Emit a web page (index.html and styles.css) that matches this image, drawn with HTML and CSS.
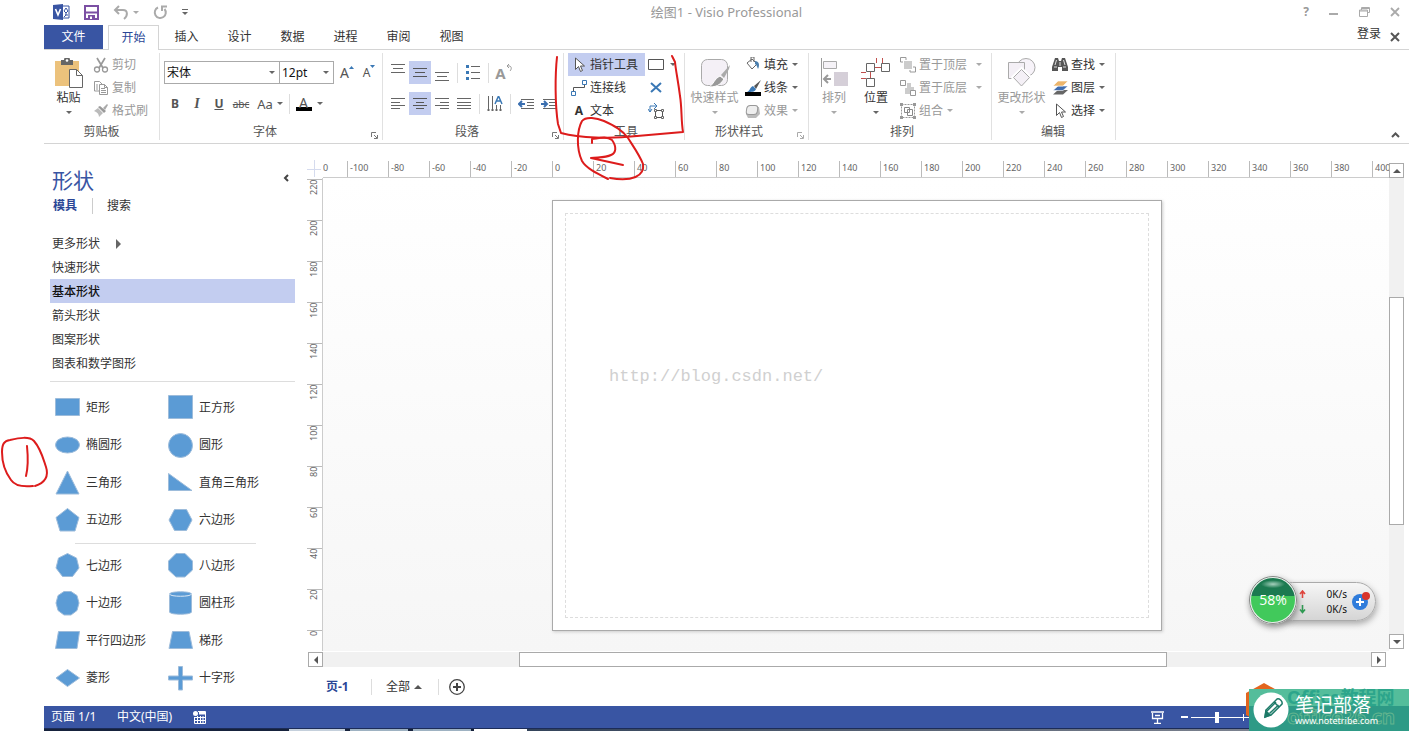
FILE: index.html
```html
<!DOCTYPE html>
<html lang="zh-CN">
<head>
<meta charset="utf-8">
<title>绘图1 - Visio Professional</title>
<link rel="stylesheet" href="styles.css">
</head>
<body>
<div class="app">
  <header class="titlebar">
    <div class="quick">
      <svg width="17" height="16" viewBox="0 0 17 16"><path d="M9 2h7v12H9z" fill="#fff" stroke="#3955a3"/><path d="M0 1l10-1v16L0 15z" fill="#3955a3"/><path d="M2.500 5l2.500 6 2.500-6" fill="none" stroke="#fff" stroke-width="1.600"/><path d="M11 7l2-3 2 3-2 2zM13 9v2l-2 2M12 11h3" fill="none" stroke="#3955a3"/></svg>
      <button class="bare" aria-label="保存"><svg width="15" height="15" viewBox="0 0 15 15"><path d="M1 1h13v13H1z" fill="#fff" stroke="#7b4fa3" stroke-width="2"/><path d="M2 7.500h11" stroke="#7b4fa3" stroke-width="2"/><path d="M4 10h7v4H4z" fill="#7b4fa3"/><path d="M6 11.500h2V14H6z" fill="#fff"/></svg></button>
      <button class="bare undo" aria-label="撤消"><svg width="16" height="15" viewBox="0 0 16 15"><path d="M6 1L2 5l4 4M2 5h8c5 0 5 6 1 9" fill="none" stroke="#aaa" stroke-width="2"/></svg><i class="caret dim"></i></button>
      <button class="bare" aria-label="重复"><svg width="15" height="15" viewBox="0 0 15 15"><path d="M5 2.500A5.500 5.500 0 1 0 11.500 4M9 6V1.500h5" fill="none" stroke="#aaa" stroke-width="2"/></svg></button>
      <button class="bare custom" aria-label="自定义"><i class="bar"></i><i class="caret"></i></button>
    </div>
    <h1 class="doc-title">绘图1 - Visio Professional</h1>
    <div class="window-buttons">
      <button class="bare" aria-label="帮助"><b>?</b></button>
      <button class="bare" aria-label="最小化"><svg width="10" height="12" viewBox="0 0 10 12"><path d="M0 8h9" stroke="#aaa" stroke-width="2"/></svg></button>
      <button class="bare" aria-label="还原"><svg width="11" height="10" viewBox="0 0 11 10"><path d="M2.500 3V.500h8v5H8M.500 3h8v6.500h-8zM.500 4h8M2.500 1.500h8" fill="none" stroke="#aaa"/></svg></button>
      <button class="bare" aria-label="关闭"><svg width="10" height="10" viewBox="0 0 10 10"><path d="M1 1l8 8M9 1L1 9" stroke="#aaa" stroke-width="1.800"/></svg></button>
    </div>
  </header>

  <nav class="tabs">
    <button class="tab file">文件</button>
    <button class="tab active">开始</button>
    <button class="tab">插入</button>
    <button class="tab">设计</button>
    <button class="tab">数据</button>
    <button class="tab">进程</button>
    <button class="tab">审阅</button>
    <button class="tab">视图</button>
    <div class="account"><a href="#">登录</a><button class="bare" aria-label="关闭文档"><svg width="10" height="10" viewBox="0 0 10 10"><path d="M1 1l8 8M9 1L1 9" stroke="#555" stroke-width="2"/></svg></button></div>
  </nav>

  <div class="ribbon">
    <section class="group g-clip">
      <div class="body">
        <button class="big"><svg width="30" height="30" viewBox="0 0 30 30"><path d="M1 3h24v25H1z" fill="#ecc27c"/><path d="M7 2h3a3 3 0 0 1 6 0h3v5H7z" fill="#666"/><circle cx="13" cy="2.500" r="1.300" fill="#fff"/><path d="M15.500 11.500h7l6 6v12h-13z" fill="#fff" stroke="#666"/><path d="M22.500 11.500v6h6" fill="none" stroke="#666"/></svg>粘贴<i class="caret"></i></button>
        <div class="stack">
          <button class="cmd off"><svg width="16" height="16" viewBox="0 0 16 16"><path d="M4 1l6 10M12 1L6 11" stroke="#999" stroke-width="1.700"/><circle cx="4" cy="12.500" r="2.500" fill="none" stroke="#999" stroke-width="1.300"/><circle cx="12" cy="12.500" r="2.500" fill="none" stroke="#999" stroke-width="1.300"/></svg>剪切</button>
          <button class="cmd off"><svg width="16" height="16" viewBox="0 0 16 16"><path d="M6 11H1.500V1.500h5L9 4M6.500 4.500h5l3 3v7h-8z" fill="none" stroke="#999"/><path d="M3 5h2M3 7h2M3 9h2M8 8.500h4M8 10.500h5M8 12.500h5M11.500 4.500v3h3" fill="none" stroke="#999"/></svg>复制</button>
          <button class="cmd off"><svg width="16" height="16" viewBox="0 0 16 16"><path d="M1 8l4-3 5 5-4 4c0-3-2-5-5-6z" fill="#bbb"/><path d="M5 4l2-1 6 5-2 2z" fill="#999"/><path d="M10 5l4-4 1 1-3 5z" fill="#aaa"/></svg>格式刷</button>
        </div>
      </div>
      <h2>剪贴板</h2>
    </section>

    <section class="group g-font">
      <div class="body rows">
        <div class="line">
          <label class="combo wide"><select aria-label="字体"><option>宋体</option></select><i class="caret"></i></label>
          <label class="combo"><select aria-label="字号"><option>12pt</option></select><i class="caret"></i></label>
          <button class="ic grow" aria-label="增大字号">A<svg width="5" height="4" viewBox="0 0 5 4"><path d="M0 4l2.500-3L5 4z" fill="#3a78b5"/></svg></button>
          <button class="ic grow small" aria-label="减小字号">A<svg width="5" height="4" viewBox="0 0 5 4"><path d="M0 0h5L2.500 3z" fill="#3a78b5"/></svg></button>
        </div>
        <div class="line">
          <button class="ic"><b>B</b></button>
          <button class="ic"><b class="it">I</b></button>
          <button class="ic"><b class="ul">U</b></button>
          <button class="ic"><s>abc</s></button>
          <button class="ic case">Aa<i class="caret"></i></button>
          <i class="vsep"></i>
          <button class="ic color"><span>A</span><i class="caret"></i></button>
        </div>
      </div>
      <h2>字体</h2><button class="launch" aria-label="字体设置"><svg width="7" height="7" viewBox="0 0 7 7"><path d="M.500 5V.500H5M3 3l3 3M6.500 3v3.500H3" fill="none" stroke="#777"/></svg></button>
    </section>

    <section class="group g-para">
      <div class="body rows">
        <div class="line">
          <button class="ic top" aria-label="顶端对齐"><svg width="16" height="16" viewBox="0 0 16 16"><path d="M1 .500h14M3 4.500h10M1 8.500h14" stroke="#666"/></svg></button>
          <button class="ic on" aria-label="中部对齐"><svg width="16" height="16" viewBox="0 0 16 16"><path d="M1 3.500h14M3 7.500h10M1 11.500h14" stroke="#555"/></svg></button>
          <button class="ic" aria-label="底端对齐"><svg width="16" height="16" viewBox="0 0 16 16"><path d="M1 7.500h14M3 11.500h10M1 15.500h14" stroke="#666"/></svg></button>
          <i class="vsep wide"></i>
          <button class="ic" aria-label="项目符号"><svg width="16" height="16" viewBox="0 0 16 16"><path d="M1 0h3v3H1zM1 6h3v3H1zM1 12h3v3H1z" fill="#3a78b5"/><path d="M6 1.500h9M6 7.500h9M6 13.500h9" stroke="#666"/></svg></button>
          <i class="vsep wide"></i>
          <button class="ic rotate" aria-label="旋转文字"><b>A</b><svg width="7" height="8" viewBox="0 0 7 8"><path d="M3 0L1 2l2 2M1 2c5-1 5 3 3 5" fill="none" stroke="#999"/></svg></button>
        </div>
        <div class="line">
          <button class="ic" aria-label="左对齐"><svg width="16" height="16" viewBox="0 0 16 16"><path d="M1 2.500h14M1 6.500h9M1 9.500h14M1 12.500h9" stroke="#666"/></svg></button>
          <button class="ic on" aria-label="居中"><svg width="16" height="16" viewBox="0 0 16 16"><path d="M1 2.500h14M4 6.500h8M1 9.500h14M4 12.500h8" stroke="#555"/></svg></button>
          <button class="ic" aria-label="右对齐"><svg width="16" height="16" viewBox="0 0 16 16"><path d="M1 2.500h14M6 6.500h9M1 9.500h14M6 12.500h9" stroke="#666"/></svg></button>
          <button class="ic" aria-label="两端对齐"><svg width="16" height="16" viewBox="0 0 16 16"><path d="M1 2.500h14M1 6.500h14M1 9.500h14M1 12.500h14" stroke="#666"/></svg></button>
          <i class="vsep wide"></i>
          <button class="ic" aria-label="文字方向"><svg width="16" height="16" viewBox="0 0 16 16"><path d="M1.500 0v15M5.500 0v15M9.500 9v6M13.500 9v6M4 14h3M8 14h3M12 14h3M0 14h3" stroke="#666"/><path d="M8 8l3.500-8L15 8M9.500 5h4" fill="none" stroke="#3a78b5" stroke-width="1.500"/></svg></button>
          <i class="vsep wide"></i>
          <button class="ic" aria-label="减少缩进"><svg width="16" height="16" viewBox="0 0 16 16"><path d="M3 3.500h13M9 6.500h7M9 9.500h7M3 12.500h13" stroke="#666"/><path d="M4 5L1 8l3 3M1 8h6" fill="none" stroke="#3a6fb0" stroke-width="2"/></svg></button>
          <button class="ic" aria-label="增加缩进"><svg width="16" height="16" viewBox="0 0 16 16"><path d="M3 3.500h13M9 6.500h7M9 9.500h7M3 12.500h13" stroke="#666"/><path d="M4 5l3 3-3 3M7 8H1" fill="none" stroke="#3a6fb0" stroke-width="2"/></svg></button>
        </div>
      </div>
      <h2>段落</h2><button class="launch" aria-label="段落设置"><svg width="7" height="7" viewBox="0 0 7 7"><path d="M.500 5V.500H5M3 3l3 3M6.500 3v3.500H3" fill="none" stroke="#777"/></svg></button>
    </section>

    <section class="group g-tool">
      <div class="body">
        <div class="stack">
          <button class="cmd on"><svg width="16" height="16" viewBox="0 0 16 16"><path d="M4.500 1v11.500l3-3 2 5 2-1-2-4.500h4z" fill="#fff" stroke="#555"/></svg>指针工具</button>
          <button class="cmd"><svg width="16" height="16" viewBox="0 0 16 16"><path d="M.500 11.500h4v4h-4zM11.500.500h4v4h-4z" fill="none" stroke="#3a78b5"/><path d="M2.500 11V7.500h11V5" fill="none" stroke="#555"/></svg>连接线</button>
          <button class="cmd"><b class="letter">A</b>文本</button>
        </div>
        <div class="stack extra">
          <button class="cmd" aria-label="矩形"><svg width="16" height="16" viewBox="0 0 16 16"><path d="M.500 2.500h15v10H.500z" fill="#fff" stroke="#555"/></svg><i class="caret"></i></button>
          <button class="cmd" aria-label="连接点"><svg width="16" height="16" viewBox="0 0 16 16"><path d="M3 3l10 9M13 3L3 12" stroke="#3a78b5" stroke-width="2"/></svg></button>
          <button class="cmd" aria-label="文本块"><svg width="16" height="16" viewBox="0 0 16 16"><path d="M7.500 7.500h7v7h-7z" fill="none" stroke="#555"/><path d="M6.500 6.500h2v2h-2zM13.500 6.500h2v2h-2zM6.500 13.500h2v2h-2zM13.500 13.500h2v2h-2z" fill="#fff" stroke="#666"/><path d="M2 9V3h6M0 6l2 3 2-3M6 0l3 3-3 3" fill="none" stroke="#3a78b5"/></svg></button>
        </div>
      </div>
      <h2>工具</h2>
    </section>

    <section class="group g-style">
      <div class="body">
        <button class="big off"><svg width="30" height="30" viewBox="0 0 30 30"><rect x="1.500" y="1.500" width="26" height="26" rx="6" fill="#f4f0f6" stroke="#aaa"/><path d="M30 7l-9 10 3 3 5-9z" fill="#aaa"/><path d="M20 18l4 3c-3 4-5 8-15 8 5-3 5-8 11-11z" fill="#999" stroke="#fff"/></svg>快速样式<i class="caret"></i></button>
        <div class="stack">
          <button class="cmd"><svg width="16" height="16" viewBox="0 0 16 16"><path d="M2 6l5-4 5 5-5 5z" fill="#fff" stroke="#666"/><path d="M6 5V0h3v5" fill="none" stroke="#666"/><path d="M10 4c4 0 5 4 3 8-1-2-1-4-3-5z" fill="#4b7fae"/></svg>填充<i class="caret"></i></button>
          <button class="cmd"><svg width="16" height="16" viewBox="0 0 16 16"><path d="M0 12h16v4H0z" fill="#000"/><path d="M16 0l-7 6 2 3z" fill="#555"/><path d="M8 6l3 3c-1 3-4 3-9 3 3-1 3-5 6-6z" fill="#3a78b5"/></svg>线条<i class="caret"></i></button>
          <button class="cmd off"><svg width="16" height="16" viewBox="0 0 16 16"><path d="M5 4h9l1 7-4 4H3l-2-4z" fill="#bbb"/><rect x="2.500" y="2.500" width="11" height="9" rx="3" fill="#eee" stroke="#999" transform="skewX(-8)"/></svg>效果<i class="caret"></i></button>
        </div>
      </div>
      <h2>形状样式</h2><button class="launch off" aria-label="形状样式设置"><svg width="7" height="7" viewBox="0 0 7 7"><path d="M.500 5V.500H5M3 3l3 3M6.500 3v3.500H3" fill="none" stroke="#aaa"/></svg></button>
    </section>

    <section class="group g-arrange">
      <div class="body">
        <button class="big off"><svg width="30" height="30" viewBox="0 0 30 30"><path d="M2.500 0v29" stroke="#999"/><path d="M4.500 3.500h13v7h-13z" fill="#f5f2f7" stroke="#aaa"/><path d="M15 14h14v14H15z" fill="#d5cfd8"/><path d="M9 17l-4 4 4 4M5 21h7" fill="none" stroke="#999" stroke-width="2"/></svg>排列<i class="caret"></i></button>
        <button class="big"><svg width="30" height="30" viewBox="0 0 30 30"><path d="M15.500 0v5M21.500 0v5M14 9.500h6M0 14.500h5M0 20.500h5M9.500 14v7" stroke="#c0504d"/><path d="M5.500 5.500h8v8h-8zM20.500 5.500h8v8h-8zM5.500 20.500h8v8h-8z" fill="#fff" stroke="#666"/></svg>位置<i class="caret"></i></button>
        <div class="stack">
          <button class="cmd off"><svg width="16" height="16" viewBox="0 0 16 16"><path d="M4 4h8v8H4z" fill="#ccc"/><path d="M3 5H.500V.500H6V3M13 10h2.500v5H10v-2" fill="none" stroke="#999"/></svg>置于顶层<i class="caret far"></i></button>
          <button class="cmd off"><svg width="16" height="16" viewBox="0 0 16 16"><path d="M7 3h4v4h3v4h-4v3H5V8h2z" fill="#ccc"/><path d="M.500.500h5v5h-5zM10.500 10.500h5v5h-5z" fill="#fff" stroke="#999"/></svg>置于底层<i class="caret far"></i></button>
          <button class="cmd off"><svg width="16" height="16" viewBox="0 0 16 16"><path d="M1.500 1.500h13v13h-13z" fill="none" stroke="#999" stroke-dasharray="2 1"/><path d="M4.500 4.500h5v5h-5zM7.500 6.500h5v6h-5z" fill="none" stroke="#888"/><path d="M0 0h3v3H0zM13 0h3v3h-3zM0 13h3v3H0zM13 13h3v3h-3z" fill="#999"/></svg>组合<i class="caret"></i></button>
        </div>
      </div>
      <h2>排列</h2>
    </section>

    <section class="group g-edit">
      <div class="body">
        <button class="big off"><svg width="30" height="30" viewBox="0 0 30 30"><circle cx="19" cy="9.500" r="9" fill="#f7f3f9" stroke="#aaa"/><path d="M1.500 4.500h16v16h-16z" fill="#f4f0f6" stroke="#aaa"/><path d="M14.500 10.500l9 9-9 9-9-9z" fill="#f4f0f6" stroke="#fff" stroke-width="3"/><path d="M14.500 11.500l8 8-8 8.500-8-8.500z" fill="#f4f0f6" stroke="#aaa"/></svg>更改形状<i class="caret"></i></button>
        <div class="stack">
          <button class="cmd"><svg width="16" height="16" viewBox="0 0 16 16"><path d="M3 1h3l1 3h2l1-3h3l3 9v4h-6v-4H6v4H0v-4z" fill="#555"/><path d="M2 10h3M11 10h3M4.500 3L3 8M11.500 3l1.500 5M8 5v4" stroke="#ddd"/></svg>查找<i class="caret"></i></button>
          <button class="cmd"><svg width="16" height="16" viewBox="0 0 16 16"><path d="M6 10h10l-5 4.500H1z" fill="#666"/><path d="M6 6h10l-5 4.500H1z" fill="#3f6db0" stroke="#fff" stroke-width=".6"/><path d="M6 1h10l-5 5H1z" fill="#ecb56c" stroke="#fff" stroke-width=".6"/></svg>图层<i class="caret"></i></button>
          <button class="cmd"><svg width="16" height="16" viewBox="0 0 16 16"><path d="M4.500 1v11.500l3-3 2 5 2-1-2-4.500h4z" fill="#fff" stroke="#555"/></svg>选择<i class="caret"></i></button>
        </div>
      </div>
      <h2>编辑</h2>
    </section>
    <button class="bare collapse" aria-label="折叠功能区"><svg width="9" height="6" viewBox="0 0 9 6"><path d="M1 5l3.500-3.500L8 5" fill="none" stroke="#555" stroke-width="2"/></svg></button>
  </div>

  <main class="work">
    <aside class="pane">
      <div class="pane-head"><h2>形状</h2><button class="bare" aria-label="折叠"><svg width="6" height="8" viewBox="0 0 6 8"><path d="M5 1L2 4l3 3" fill="none" stroke="#444" stroke-width="2"/></svg></button></div>
      <div class="pane-tabs"><button class="bare sel">模具</button><button class="bare">搜索</button></div>
      <ul class="stencils">
        <li><button class="bare">更多形状<i class="tri"></i></button></li>
        <li><button class="bare">快速形状</button></li>
        <li class="sel"><button class="bare">基本形状</button></li>
        <li><button class="bare">箭头形状</button></li>
        <li><button class="bare">图案形状</button></li>
        <li><button class="bare">图表和数学图形</button></li>
      </ul>
      <ul class="shapes">
        <li><svg width="25" height="25" viewBox="0 0 25 25"><path d="M.500 3.500h24v17H.500z"/></svg>矩形</li>
        <li><svg width="25" height="25" viewBox="0 0 25 25"><path d="M.500.500h24v23H.500z"/></svg>正方形</li>
        <li><svg width="25" height="25" viewBox="0 0 25 25"><ellipse cx="12.500" cy="12" rx="12" ry="8"/></svg>椭圆形</li>
        <li><svg width="25" height="25" viewBox="0 0 25 25"><circle cx="12.500" cy="12.500" r="12"/></svg>圆形</li>
        <li><svg width="25" height="25" viewBox="0 0 25 25"><path d="M12.500 1L24 24H1z"/></svg>三角形</li>
        <li><svg width="25" height="25" viewBox="0 0 25 25"><path d="M.500 3.500L24 20.500H.500z"/></svg>直角三角形</li>
        <li><svg width="25" height="25" viewBox="0 0 25 25"><path d="M12.500.500L24 9.500l-4 13.500H5L1 9.500z"/></svg>五边形</li>
        <li><svg width="25" height="25" viewBox="0 0 25 25"><path d="M6.500 1.500h12l5.500 10.500-5.500 10.500h-12L1 12z"/></svg>六边形</li>
      </ul>
      <ul class="shapes second">
        <li><svg width="25" height="25" viewBox="0 0 25 25"><path d="M12.500.500L21.500 5l2.500 10-6.500 8.500h-10L1 15 3.500 5z"/></svg>七边形</li>
        <li><svg width="25" height="25" viewBox="0 0 25 25"><path d="M8 .500h9l7.500 7.500v9L17 24H8L.500 17V8z"/></svg>八边形</li>
        <li><svg width="25" height="25" viewBox="0 0 25 25"><path d="M9 .500h7L22 4.500l2 7.500-2 7.500-6 4.500H9l-6-4.500L1 12l2-7.500z"/></svg>十边形</li>
        <li><svg width="25" height="25" viewBox="0 0 25 25"><path d="M1.500 3c0-3 22-3 22 0v18c0 3-22 3-22 0z"/><path d="M1.500 3c0 3 22 3 22 0" fill="none" stroke="#dce8f4"/></svg>圆柱形</li>
        <li><svg width="25" height="25" viewBox="0 0 25 25"><path d="M3.500 3.500h21l-2.500 17H.500z"/></svg>平行四边形</li>
        <li><svg width="25" height="25" viewBox="0 0 25 25"><path d="M4.500 3.500h16.500l3.500 17H1z"/></svg>梯形</li>
        <li><svg width="25" height="25" viewBox="0 0 25 25"><path d="M12.500 3.500L24.500 12l-12 8.500L1 12z"/></svg>菱形</li>
        <li><svg width="25" height="25" viewBox="0 0 25 25"><path d="M10.500.500h4V10h10v4h-10v10h-4V14H.500v-4h10z"/></svg>十字形</li>
      </ul>
    </aside>

    <div class="drawing">
      <div class="corner"></div>
      <div class="ruler-h"><span class="first">0</span><span>-100</span><span>-80</span><span>-60</span><span>-40</span><span>-20</span><span>0</span><span>20</span><span>40</span><span>60</span><span>80</span><span>100</span><span>120</span><span>140</span><span>160</span><span>180</span><span>200</span><span>220</span><span>240</span><span>260</span><span>280</span><span>300</span><span>320</span><span>340</span><span>360</span><span>380</span><span>400</span></div>
      <div class="ruler-v"><span>220</span><span>200</span><span>180</span><span>160</span><span>140</span><span>120</span><span>100</span><span>80</span><span>60</span><span>40</span><span>20</span><span>0</span></div>
      <div class="canvas"><div class="sheet"><div class="margins"><span class="url">http://blog.csdn.net/</span></div></div></div>
      <div class="scroll-v"><button aria-label="向上"><i class="arrow up"></i></button><div class="track"><div class="thumb"></div></div><button aria-label="向下"><i class="arrow down"></i></button></div>
      <div class="scroll-h"><button aria-label="向左"><i class="arrow left"></i></button><div class="track"><div class="thumb"></div></div><button aria-label="向右"><i class="arrow right"></i></button></div>
      <div class="page-tabs">
        <button class="bare sel">页-1</button>
        <button class="bare all">全部<i class="arrow up"></i></button>
        <button class="bare" aria-label="插入页"><svg width="16" height="16" viewBox="0 0 16 16"><circle cx="8" cy="8" r="7.300" fill="none" stroke="#444" stroke-width="1.300"/><path d="M8 4v8M4 8h8" stroke="#444" stroke-width="2"/></svg></button>
      </div>
    </div>
  </main>

  <footer class="status">
    <span class="page-no">页面 1/1</span><span class="lang">中文(中国)</span>
    <svg width="13" height="13" viewBox="0 0 13 13"><path d="M5 .500h7.500v12h-11V6" fill="none" stroke="#fff"/><circle cx="2.500" cy="2.500" r="2.500" fill="#fff"/><path d="M6 2h6" stroke="#fff" stroke-width="3"/><path d="M2 6.500h10M2 9.500h10M4.500 5v7M7.500 5v7M10 5v7" stroke="#fff"/></svg>
    <div class="zoom">
      <svg width="13" height="13" viewBox="0 0 13 13"><path d="M0 1h13M1.500 2v5.500h10V2M6.500 8v4M3 12.500h7M4 4.500h5" fill="none" stroke="#fff" stroke-width="1.300"/></svg>
      <button class="bare" aria-label="缩小"><i class="minus"></i></button>
      <input type="range" min="0" max="100" value="24" aria-label="缩放">
    </div>
  </footer>
  <div class="taskbar"></div>
</div>

<div class="meter">
  <div class="rates">
    <svg width="7" height="24" viewBox="0 0 7 24"><path d="M3.500 8V2M1 4l2.500-3L6 4" fill="none" stroke="#e0443c" stroke-width="1.600"/><path d="M3.500 15v6M1 19.500l2.500 3 2.500-3" fill="none" stroke="#2c9a50" stroke-width="1.600"/></svg>
    <div class="nums"><span>0K/s</span><span>0K/s</span></div>
    <svg width="18" height="20" viewBox="0 0 18 20"><circle cx="8" cy="10" r="8" fill="#2f7cdb"/><path d="M8 6v8M4 10h8" stroke="#fff" stroke-width="2"/><circle cx="14" cy="4" r="4" fill="#d9342b"/></svg>
  </div>
  <div class="ball">58%</div>
</div>

<div class="brand">
  <svg class="hex" width="40" height="42" viewBox="0 0 40 42"><path d="M18 0l18 10v22L18 42 0 32V10z" fill="#e2651f"/></svg>
  <div class="plate">
    <div class="ghost"><span>Office教程网</span><span class="lower">office26.cn</span></div>
    <svg class="pencil" width="36" height="36" viewBox="0 0 36 36"><circle cx="18" cy="18" r="17.500" fill="#fff"/><g fill="#fff" stroke="#1d7a68" stroke-width="1.500"><path d="M12 25l1-7L24 7c2-1 6 2 5 5L18 23z"/><path d="M21 10l5 5M14 19l9-9M16.500 21.500l9-8.500" fill="none"/><path d="M12 25l1-6 4 4z" fill="#1d7a68"/></g></svg>
    <div class="names"><strong>笔记部落</strong><span>www.notetribe.com</span></div>
  </div>
</div>

<svg class="marks" width="700" height="500" viewBox="0 0 700 500" fill="none" stroke="#dd1c1c" stroke-width="2" stroke-linecap="round" stroke-linejoin="round">
  <path d="M557 57C555 75 555 105 558 124L561 133C580 138 610 139 637 136L683 132C681 120 682 108 680 96C678 80 676 72 675 62L672 56"/>
  <path d="M608 179C596 173 586 168 582 161C576 148 577 130 582 121C586 116 597 118 604 121C615 126 622 130 628 138C635 149 640 156 643 164C645 176 632 182 610 178"/>
  <path d="M592 143V139C600 138 606 136 612 140C617 147 616 153 611 155C605 158 598 157 591 158L623 165"/>
  <path d="M33 486C24 487 15 486 11 480C5 472 2 461 2 452C2 444 4 441 10 440C19 438 29 436 34 441C41 449 43 458 46 467C49 476 45 483 35 486M27 446C28 456 28 468 26 476"/>
</svg>
</body>
</html>
```
FILE: styles.css
```css
* { box-sizing: border-box; }
body {
  margin: 0;
  position: relative;
  background: #fff;
  color: #333;
  font-family: "Noto Sans", "Noto Sans CJK SC", sans-serif;
  font-size: 12px;
  line-height: 16px;
  overflow: hidden;
}
button, select { font: inherit; color: inherit; background: none; border: 0; margin: 0; padding: 0; text-align: left; }
h1, h2 { margin: 0; font-size: 12px; font-weight: 400; }
ul { list-style: none; margin: 0; padding: 0; }
svg { display: block; flex: none; }
.app { margin-left: 44px; min-height: 100vh; display: flex; flex-direction: column; }
.bare { display: flex; align-items: center; }
.caret { flex: none; width: 0; height: 0; border: 3px solid transparent; border-top-color: #666; border-bottom: 0; }

.titlebar { display: grid; grid-template-columns: 1fr auto 1fr; align-items: center; height: 24px; padding: 0 9px; }
.quick { display: flex; align-items: center; gap: 14px; }
.undo { gap: 4px; }
.caret.dim { border-top-color: #aaa; }
.custom { flex-direction: column; gap: 2px; }
.custom .bar { width: 6px; height: 1px; background: #666; }
.doc-title { color: #999; font-size: 13px; }
.window-buttons { display: flex; justify-content: flex-end; align-items: center; gap: 20px; color: #999; }

.tabs { display: flex; height: 26px; border-bottom: 1px solid #d4d4d4; padding-top: 1px; }
.tab { width: 53px; text-align: center; }
.tab.file { width: 59px; margin-right: 4px; background: #3955a3; color: #fff; }
.tab.active { width: 51px; margin: 0 1px; color: #2a4696; background: #fff; border: 1px solid #d4d4d4; border-bottom: 0; margin-bottom: -1px; }
.account { margin-left: auto; display: flex; align-items: center; gap: 9px; padding-right: 9px; }
.account a { color: #333; text-decoration: none; padding-bottom: 6px; }

.ribbon { display: flex; padding-top: 3px; border-bottom: 1px solid #d4d4d4; }
.group { position: relative; border-right: 1px solid #e1e1e1; height: 87px; margin-bottom: 3px; display: flex; flex-direction: column; }
.group h2 { text-align: center; padding-top: 1px; color: #555; }
.body { display: flex; height: 72px; }
.body.rows { flex-direction: column; padding-top: 8px; gap: 8px; }
.line { display: flex; align-items: center; height: 23px; }
.launch { position: absolute; right: 4px; bottom: 1px; }
.g-clip { width: 116px; }
.g-font { width: 223px; padding-left: 4px; }
.g-font h2, .g-para h2 { padding-right: 16px; }
.g-para { width: 181px; padding-left: 4px; }
.g-tool { width: 121px; padding-left: 4px; }
.g-style { width: 124px; padding-left: 5px; }
.g-style h2 { padding-right: 20px; }
.g-arrange { width: 183px; padding-left: 4px; }
.g-edit { width: 124px; padding-left: 5px; }
.g-edit h2 { padding-right: 6px; }
.big { display: flex; flex-direction: column; align-items: center; width: 49px; padding-top: 5px; white-space: nowrap; }
.big svg { margin-bottom: 2px; }
.big .caret { margin-top: 5px; }
.off { color: #999; }
.off .caret { border-top-color: #aaa; }
.g-arrange .big { width: 42px; }
.g-arrange .stack { margin-left: 3px; }
.g-style .stack { margin-left: 6px; }
.g-style .cmd, .g-edit .cmd { gap: 3px; }
.g-edit .stack { margin-left: 6px; }
.stack { display: flex; flex-direction: column; }
.cmd { display: flex; align-items: center; gap: 3px; height: 23px; white-space: nowrap; }
.cmd .caret { margin-left: 1px; }
.cmd .caret.far { margin-left: 6px; }
.g-tool .cmd { width: 77px; padding-left: 3px; }
.g-tool .extra .cmd { width: 30px; gap: 5px; }
.letter { width: 16px; text-align: center; }
.on { background: #c3cdf0; }

.combo { position: relative; width: 55px; height: 23px; border: 1px solid #aaa; margin-left: -1px; }
.combo.wide { width: 116px; margin-left: 0; }
.combo select { appearance: none; width: 100%; height: 21px; padding: 0 2px; color: #111; }
.combo .caret { position: absolute; right: 4px; top: 9px; }
.ic { display: flex; align-items: center; justify-content: center; width: 22px; height: 23px; color: #555; }
.ic.top { align-items: flex-start; padding-top: 3px; }
.grow { font-size: 14px; margin-left: 2px; align-items: center; }
.grow.small { font-size: 12px; margin-left: 0; }
.grow svg { align-self: flex-start; margin-top: 4px; }
.it { font-style: italic; font-family: "Liberation Serif", serif; font-size: 14px; }
.ul { text-decoration: underline; }
.ic s { font-size: 10px; }
.case { width: 36px; gap: 4px; font-size: 13px; }
.vsep { width: 1px; height: 20px; background: #ddd; }
.vsep.wide { margin: 0 4px; }
.g-font .vsep { margin: 0 4px; margin-left: 1px; }
.color { width: 30px; gap: 5px; }
.color span { width: 16px; height: 15px; line-height: 13px; font-size: 14px; text-align: center; border-bottom: 4px solid #000; }
.rotate { color: #999; font-size: 15px; }
.rotate svg { align-self: flex-start; margin-top: 3px; }
.collapse { align-self: flex-end; margin: 0 9px 5px auto; }

.work { flex: 1; display: grid; grid-template-columns: 263px minmax(0, 1fr); }
.pane { padding: 20px 12px 0 6px; display: flex; flex-direction: column; }
.pane-head { display: flex; justify-content: space-between; align-items: flex-start; padding: 0 6px 0 2px; }
.pane-head h2 { font-size: 21px; line-height: 32px; color: #3955a3; }
.pane-head .bare { margin-top: 10px; }
.pane-tabs { display: flex; padding: 2px 3px; }
.pane-tabs .sel { color: #2a4696; font-weight: 700; padding-right: 15px; margin-right: 14px; border-right: 1px solid #ccc; }
.stencils { margin-top: 15px; padding-bottom: 6px; border-bottom: 1px solid #ddd; }
.stencils li { height: 24px; padding: 5px 2px 3px; }
.stencils .sel { background: #c3cdf0; color: #111; font-weight: 500; }
.tri { border: 5px solid transparent; border-left-color: #666; border-right: 0; margin-left: 16px; }
.shapes { display: grid; grid-template-columns: 113px 1fr; grid-template-rows: repeat(4, 1fr); height: 150px; margin: 7px 0 0 5px; }
.shapes li { display: flex; align-items: center; gap: 6px; }
.shapes svg { fill: #5b9bd5; stroke: #9dbcdb; }
.second { margin-top: 4px; position: relative; padding-top: 4px; height: 154px; }
.second::before { content: ""; position: absolute; top: 0; left: 20px; width: 181px; height: 1px; background: #ddd; }

.drawing { display: grid; grid-template-columns: 16px minmax(0, 1fr) 15px; grid-template-rows: 34px minmax(0, 1fr) 16px 39px; padding-right: 5px; }
.corner { background: linear-gradient(#d5dbee, #d5dbee) 7px 16px / 1px 17px no-repeat, linear-gradient(#d5dbee, #d5dbee) 0 25px / 14px 1px no-repeat; }
.ruler-h { grid-area: 1 / 2; display: flex; align-items: flex-end; overflow: hidden; border-bottom: 1px solid #ccc; }
.ruler-h span { flex: none; width: 41px; height: 16px; border-left: 1px solid #bbb; padding-left: 2px; font-size: 9px; line-height: 14px; color: #666; }
.ruler-h .first { width: 24px; border: 0; padding: 0; }
.ruler-v { grid-area: 2 / 1; border-right: 1px solid #ccc; overflow: hidden; padding-top: 1px; }
.ruler-v span { display: block; height: 41px; width: 15px; border-bottom: 1px solid #bbb; font-size: 9px; line-height: 14px; padding-left: 3px; color: #666; writing-mode: vertical-rl; transform: rotate(180deg); text-align: right; }
.ruler-v span:last-child { height: 20px; }
.canvas { grid-area: 2 / 2; background: linear-gradient(#fff, #f6f6f6); padding: 22px 227px 20px 229px; display: flex; }
.sheet { flex: 1; background: #fff; border: 1px solid #aaa; padding: 12px; box-shadow: 1px 1px 3px #ccc; display: flex; }
.margins { flex: 1; border: 1px dashed #ddd; padding: 153px 43px; }
.url { font-family: "Liberation Mono", monospace; font-size: 17px; line-height: 20px; color: #d0d0d0; }
.scroll-v { grid-area: 1 / 3 / 3 / 4; margin: 19px 0 2px; display: flex; flex-direction: column; }
.scroll-h { grid-area: 3 / 1 / 4 / 3; padding: 1px 3px 0 1px; display: flex; }
.drawing .scroll-v button, .drawing .scroll-h button { flex: none; width: 15px; height: 15px; border: 1px solid #aaa; background: #fff; display: flex; align-items: center; justify-content: center; }
.track { flex: 1; background: #f1f1f1; display: grid; }
.thumb { background: #fff; border: 1px solid #aaa; }
.scroll-v .track { grid-template-rows: 119fr 228fr 109fr; }
.scroll-v .thumb { grid-row: 2; }
.scroll-h .track { grid-template-columns: 196fr 648fr 204fr; }
.scroll-h .thumb { grid-column: 2; }
.arrow { border: 4px solid transparent; }
.arrow.up { border-bottom-color: #555; border-top: 0; }
.arrow.down { border-top-color: #555; border-bottom: 0; }
.arrow.left { border-right-color: #555; border-left: 0; }
.arrow.right { border-left-color: #555; border-right: 0; }
.page-tabs { grid-area: 4 / 1 / 5 / 4; display: flex; align-items: center; padding-left: 19px; }
.page-tabs .sel { color: #2a4696; font-weight: 700; width: 46px; border-right: 1px solid #ddd; }
.page-tabs .all { width: 67px; padding-left: 14px; gap: 4px; border-right: 1px solid #ddd; margin-right: 10px; }

.status { display: flex; align-items: center; height: 22px; padding-left: 7px; background: #3955a3; color: #fff; }
.page-no { width: 66px; }
.lang { width: 76px; }
.zoom { margin-left: auto; display: flex; align-items: center; padding-right: 114px; }
.minus { width: 7px; height: 2px; background: #fff; margin: 0 3px 0 17px; }
.zoom input { appearance: none; width: 104px; height: 16px; margin: 0; background: linear-gradient(#fff, #fff) 50% 50% / 1px 7px no-repeat, linear-gradient(#fff, #fff) 0 50% / 100% 1px no-repeat; }
.zoom input::-webkit-slider-thumb { appearance: none; width: 4px; height: 11px; background: #fff; }
.taskbar { height: 3px; border-top: 1px solid #1c2c58; background: linear-gradient(90deg, #16223c 0 245px, #c5d0dc 245px 301px, #16223c 301px 306px, #9eb2c2 306px 364px, #16223c 364px 369px, #9eb2c2 369px 427px, #16223c 427px 430px, #fff 430px 483px, #33435a 483px, #8b8f9a 100%); }

.meter { position: absolute; right: 33px; top: 576px; width: 127px; height: 48px; }
.rates { margin: 6px 0 0 24px; height: 39px; border-radius: 20px; border: 1px solid #aaa; background: linear-gradient(#f6f6f6, #d5d5d5); box-shadow: 1px 3px 6px #aaa; display: flex; align-items: center; justify-content: flex-end; gap: 5px; padding-right: 5px; }
.nums { display: flex; flex-direction: column; width: 36px; text-align: right; color: #111; font-size: 10px; line-height: 15px; }
.ball { position: absolute; left: 0; top: 0; width: 48px; height: 48px; border-radius: 50%; border: 2px solid #e9f3ec; outline: 1px solid #888; outline-offset: -1px; background: radial-gradient(ellipse 12px 4px at 50% 14%, #a5d0bc, transparent), linear-gradient(#1c7a50 0 42%, #41c95b 42%); color: #fff; font: 14px/44px "Open Sans", sans-serif; text-align: center; box-shadow: 1px 3px 6px #888; }

.brand { position: absolute; right: 0; bottom: 0; width: 163px; height: 48px; }
.hex { position: absolute; left: 0; top: 0; }
.plate { position: absolute; left: 3px; right: 0; top: 6px; bottom: 0; background: linear-gradient(#54bd9b 0 17px, #2e9a86 17px); display: flex; align-items: center; padding-left: 4px; }
.ghost { position: absolute; left: 38px; top: -2px; display: flex; flex-direction: column; font-size: 18px; line-height: 20px; font-weight: 700; color: #2ca58b; white-space: nowrap; }
.ghost .lower { color: #2e9a86; font-size: 20px; -webkit-text-stroke: 1px #63b58f; }
.pencil { position: relative; }
.names { position: relative; padding-left: 6px; display: flex; flex-direction: column; color: #fff; font-size: 9px; line-height: 10px; }
.names strong { font-size: 19px; line-height: 22px; font-weight: 400; }
.marks { position: absolute; left: 0; top: 0; pointer-events: none; }
```
